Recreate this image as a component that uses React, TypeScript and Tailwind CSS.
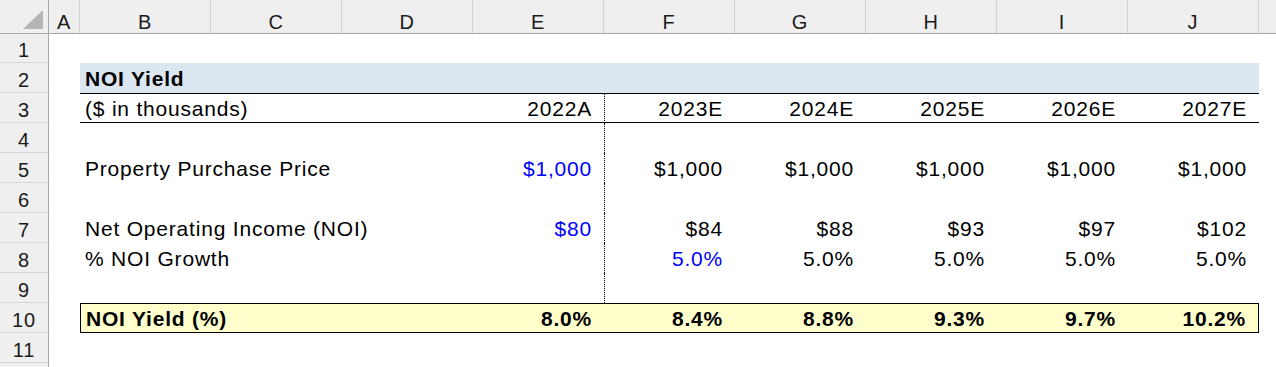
const GRID = "grid grid-cols-[49px_31px_repeat(9,131px)_1fr]";
const COLS = ["A", "B", "C", "D", "E", "F", "G", "H", "I", "J"];

type Val = { v: string; blue?: boolean } | null;

interface RowSpec {
  n: number;
  label?: string;
  values?: Val[];
  kind?: "title" | "years" | "total";
  dotted?: boolean;
  hideNumber?: boolean;
}

const rows: RowSpec[] = [
  { n: 2, label: "NOI Yield", kind: "title" },
  {
    n: 3,
    label: "($ in thousands)",
    kind: "years",
    dotted: true,
    values: [{ v: "2022A" }, { v: "2023E" }, { v: "2024E" }, { v: "2025E" }, { v: "2026E" }, { v: "2027E" }],
  },
  { n: 4, dotted: true },
  {
    n: 5,
    label: "Property Purchase Price",
    dotted: true,
    values: [{ v: "$1,000", blue: true }, { v: "$1,000" }, { v: "$1,000" }, { v: "$1,000" }, { v: "$1,000" }, { v: "$1,000" }],
  },
  { n: 6, dotted: true },
  {
    n: 7,
    label: "Net Operating Income (NOI)",
    dotted: true,
    values: [{ v: "$80", blue: true }, { v: "$84" }, { v: "$88" }, { v: "$93" }, { v: "$97" }, { v: "$102" }],
  },
  {
    n: 8,
    label: "% NOI Growth",
    dotted: true,
    values: [null, { v: "5.0%", blue: true }, { v: "5.0%" }, { v: "5.0%" }, { v: "5.0%" }, { v: "5.0%" }],
  },
  { n: 9, dotted: true },
  {
    n: 10,
    label: "NOI Yield (%)",
    kind: "total",
    values: [{ v: "8.0%" }, { v: "8.4%" }, { v: "8.8%" }, { v: "9.3%" }, { v: "9.7%" }, { v: "10.2%" }],
  },
  { n: 11 },
  { n: 12, hideNumber: true },
];

function HeaderRow() {
  return (
    <div className={`${GRID} h-[34px] bg-[#efefef] border-b border-[#a8a8a8]`}>
      <div className="flex items-start justify-end pr-[4px] pt-[10px] border-r border-[#a8a8a8]">
        <svg width="21" height="19" viewBox="0 0 21 19">
          <polygon points="20,0 20,19 0,19" fill="#b5b5b5" />
        </svg>
      </div>
      {COLS.map((c) => (
        <div
          key={c}
          className="flex items-end justify-center pb-[1px] border-r border-[#d2d2d2] text-[20px] leading-[20px] text-[#1a1a1a]"
        >
          {c}
        </div>
      ))}
      <div />
    </div>
  );
}

function RowNumber({ n }: { n?: number }) {
  return (
    <div className="flex items-end justify-center pb-[2px] bg-[#efefef] border-r border-r-[#a8a8a8] border-b border-b-[#d6d6d6] text-[20px] leading-[20px] text-[#1a1a1a]">
      {n}
    </div>
  );
}

function SheetRow({ row }: { row: RowSpec }) {
  const { kind } = row;
  const bg = kind === "title" ? "bg-[#dce6f1]" : kind === "total" ? "bg-[#ffffcc]" : "";
  const lines = kind === "years" || kind === "total" ? "border-y border-black pb-[3px]" : "pb-[4px]";
  const weight = kind === "title" || kind === "total" ? "font-bold" : "";
  const values = row.values ?? [null, null, null, null, null, null];

  return (
    <div className={`${GRID} h-[30px]`}>
      <RowNumber n={row.hideNumber ? undefined : row.n} />
      <div />
      <div
        className={`col-span-3 flex items-end pl-[5px] ${bg} ${lines} ${weight} ${
          kind === "total" ? "border-l" : ""
        }`}
      >
        {row.label}
      </div>
      {values.map((val, i) => (
        <div
          key={i}
          className={`flex items-end justify-end pr-[12px] ${bg} ${lines} ${weight} ${
            i === 1 && row.dotted ? "border-l border-l-black [border-left-style:dotted]" : ""
          } ${kind === "total" && i === 5 ? "border-r" : ""} ${val?.blue ? "text-[#0000ff]" : ""}`}
        >
          {val?.v}
        </div>
      ))}
      <div />
    </div>
  );
}

export default function App() {
  return (
    <div className="w-[1276px] h-[367px] overflow-hidden bg-white text-black font-['Liberation_Sans',Arial,sans-serif] text-[21px] leading-[20px] tracking-[0.8px]">
      <HeaderRow />
      {/* row 1 is a pixel shorter so row 2 lands on y=63 */}
      <div className={`${GRID} h-[29px]`}>
        <RowNumber n={1} />
      </div>
      {rows.map((r) => (
        <SheetRow key={r.n} row={r} />
      ))}
    </div>
  );
}
